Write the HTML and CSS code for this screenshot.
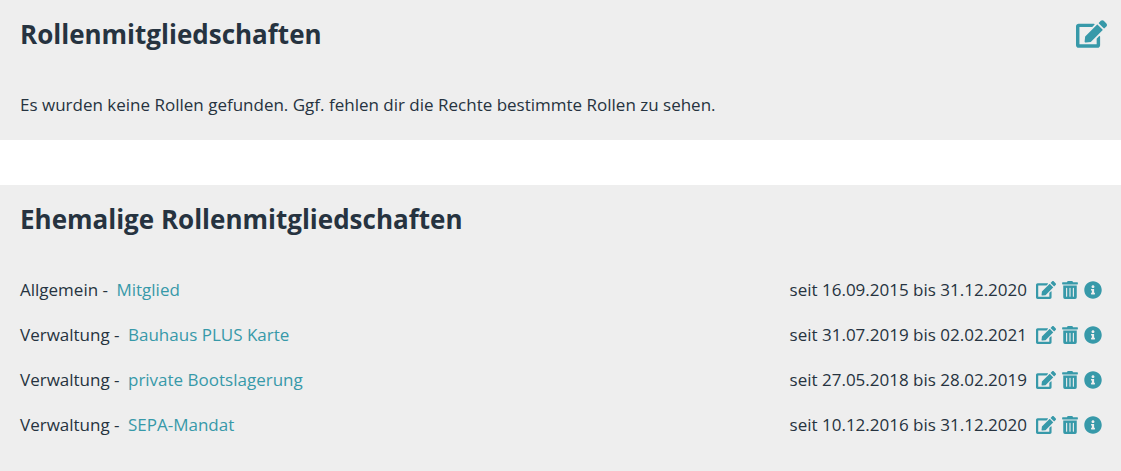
FILE: index.html
```
<!DOCTYPE html>
<html lang="de">
<head>
    <meta charset="UTF-8">
    <meta name="viewport" content="width=device-width, initial-scale=1.0">
    <title>Rollenmitgliedschaften</title>
    <link rel="stylesheet" href="styles.css">
</head>
<body>
    <svg class="sprite" aria-hidden="true">
        <symbol id="icon-edit" viewBox="0 0 576 512">
            <path d="M402.6 83.2l90.2 90.2c3.8 3.8 3.8 10 0 13.8L274.4 405.6l-92.8 10.3c-12.4 1.4-22.9-9.1-21.5-21.5l10.3-92.8L388.8 83.2c3.8-3.8 10-3.8 13.8 0zm162-22.9l-48.8-48.8c-15.2-15.2-39.9-15.2-55.2 0l-35.4 35.4c-3.8 3.8-3.8 10 0 13.8l90.2 90.2c3.8 3.8 10 3.8 13.8 0l35.4-35.4c15.2-15.3 15.2-40 0-55.2zM384 346.2V448H64V128h229.8c3.2 0 6.2-1.3 8.5-3.5l40-40c7.6-7.6 2.2-20.5-8.5-20.5H48C21.5 64 0 85.5 0 112v352c0 26.5 21.5 48 48 48h352c26.5 0 48-21.5 48-48V306.2c0-10.7-12.9-16-20.5-8.5l-40 40c-2.2 2.3-3.5 5.3-3.5 8.5z"/>
        </symbol>
        <symbol id="icon-trash" viewBox="0 0 448 512">
            <path fill-rule="evenodd" d="M32 464a48 48 0 0 0 48 48h288a48 48 0 0 0 48-48V128H32zm272-256a16 16 0 0 1 32 0v224a16 16 0 0 1-32 0zm-96 0a16 16 0 0 1 32 0v224a16 16 0 0 1-32 0zm-96 0a16 16 0 0 1 32 0v224a16 16 0 0 1-32 0zM432 32H312l-9.4-18.7A24 24 0 0 0 281.1 0H166.8a23.7 23.7 0 0 0-21.4 13.3L136 32H16A16 16 0 0 0 0 48v32a16 16 0 0 0 16 16h416a16 16 0 0 0 16-16V48a16 16 0 0 0-16-16z"/>
        </symbol>
        <symbol id="icon-info" viewBox="0 0 512 512">
            <path d="M256 8C119 8 8 119.1 8 256c0 137 111 248 248 248s248-111 248-248C504 119.1 393 8 256 8zm0 110c23.2 0 42 18.8 42 42s-18.8 42-42 42-42-18.8-42-42 18.8-42 42-42zm56 254c0 6.6-5.4 12-12 12h-88c-6.6 0-12-5.4-12-12v-24c0-6.6 5.4-12 12-12h12v-64h-12c-6.6 0-12-5.4-12-12v-24c0-6.6 5.4-12 12-12h64c6.6 0 12 5.4 12 12v100h12c6.6 0 12 5.4 12 12v24z"/>
        </symbol>
    </svg>

    <section class="card">
        <div class="card-header">
            <h2>Rollenmitgliedschaften</h2>
            <button type="button" class="icon-button large" aria-label="Bearbeiten"><svg><use href="#icon-edit"/></svg></button>
        </div>
        <p>Es wurden keine Rollen gefunden. Ggf. fehlen dir die Rechte bestimmte Rollen zu sehen.</p>
    </section>

    <section class="card">
        <div class="card-header">
            <h2>Ehemalige Rollenmitgliedschaften</h2>
        </div>
        <ul class="roles">
            <li>
                <span class="role">Allgemein - <a href="#">Mitglied</a></span>
                <span class="period">seit 16.09.2015 bis 31.12.2020</span>
                <span class="actions">
                    <button type="button" class="icon-button edit" aria-label="Bearbeiten"><svg><use href="#icon-edit"/></svg></button>
                    <button type="button" class="icon-button trash" aria-label="Löschen"><svg><use href="#icon-trash"/></svg></button>
                    <button type="button" class="icon-button info" aria-label="Info"><svg><use href="#icon-info"/></svg></button>
                </span>
            </li>
            <li>
                <span class="role">Verwaltung - <a href="#">Bauhaus PLUS Karte</a></span>
                <span class="period">seit 31.07.2019 bis 02.02.2021</span>
                <span class="actions">
                    <button type="button" class="icon-button edit" aria-label="Bearbeiten"><svg><use href="#icon-edit"/></svg></button>
                    <button type="button" class="icon-button trash" aria-label="Löschen"><svg><use href="#icon-trash"/></svg></button>
                    <button type="button" class="icon-button info" aria-label="Info"><svg><use href="#icon-info"/></svg></button>
                </span>
            </li>
            <li>
                <span class="role">Verwaltung - <a href="#">private Bootslagerung</a></span>
                <span class="period">seit 27.05.2018 bis 28.02.2019</span>
                <span class="actions">
                    <button type="button" class="icon-button edit" aria-label="Bearbeiten"><svg><use href="#icon-edit"/></svg></button>
                    <button type="button" class="icon-button trash" aria-label="Löschen"><svg><use href="#icon-trash"/></svg></button>
                    <button type="button" class="icon-button info" aria-label="Info"><svg><use href="#icon-info"/></svg></button>
                </span>
            </li>
            <li>
                <span class="role">Verwaltung - <a href="#">SEPA-Mandat</a></span>
                <span class="period">seit 10.12.2016 bis 31.12.2020</span>
                <span class="actions">
                    <button type="button" class="icon-button edit" aria-label="Bearbeiten"><svg><use href="#icon-edit"/></svg></button>
                    <button type="button" class="icon-button trash" aria-label="Löschen"><svg><use href="#icon-trash"/></svg></button>
                    <button type="button" class="icon-button info" aria-label="Info"><svg><use href="#icon-info"/></svg></button>
                </span>
            </li>
        </ul>
    </section>
</body>
</html>
```
FILE: styles.css
```
:root {
    --card-color: #eeeeee;
    --text-color: #263340;
    --link-color: #3799a9;
}

* {
    margin: 0;
    padding: 0;
    box-sizing: border-box;
}

body {
    font-family: 'Segoe UI', 'Open Sans', 'Noto Sans', sans-serif;
    font-size: 17px;
    line-height: 26px;
    color: var(--text-color);
    background-color: white;
}

.sprite {
    display: none;
}

.card {
    background-color: var(--card-color);
    padding: 14px 14px 22px 20px;
    margin-bottom: 45px;
}

.card:last-child {
    padding-bottom: 33px;
    margin-bottom: 0;
}

.card-header {
    display: flex;
    justify-content: space-between;
    align-items: center;
    min-height: 40px;
    margin-bottom: 38px;
}

h2 {
    font-size: 26px;
    line-height: 36px;
    font-weight: 700;
}

.roles {
    list-style: none;
}

.roles li {
    display: flex;
    align-items: center;
    padding-right: 5px;
    margin-bottom: 19px;
}

.roles li:last-child {
    margin-bottom: 0;
}

.role {
    flex-grow: 1;
}

a {
    margin-left: 4px;
    color: var(--link-color);
    text-decoration: none;
}

.actions {
    display: flex;
    align-items: center;
    gap: 6px;
    margin-left: 9px;
}

.icon-button {
    display: flex;
    border: none;
    background: none;
    color: var(--link-color);
    cursor: pointer;
}

.icon-button svg {
    width: 18px;
    height: 18px;
    fill: currentColor;
}

.edit svg {
    width: 20px;
}

.trash svg {
    width: 16px;
}

.large svg {
    width: 31px;
    height: 28px;
}
```
